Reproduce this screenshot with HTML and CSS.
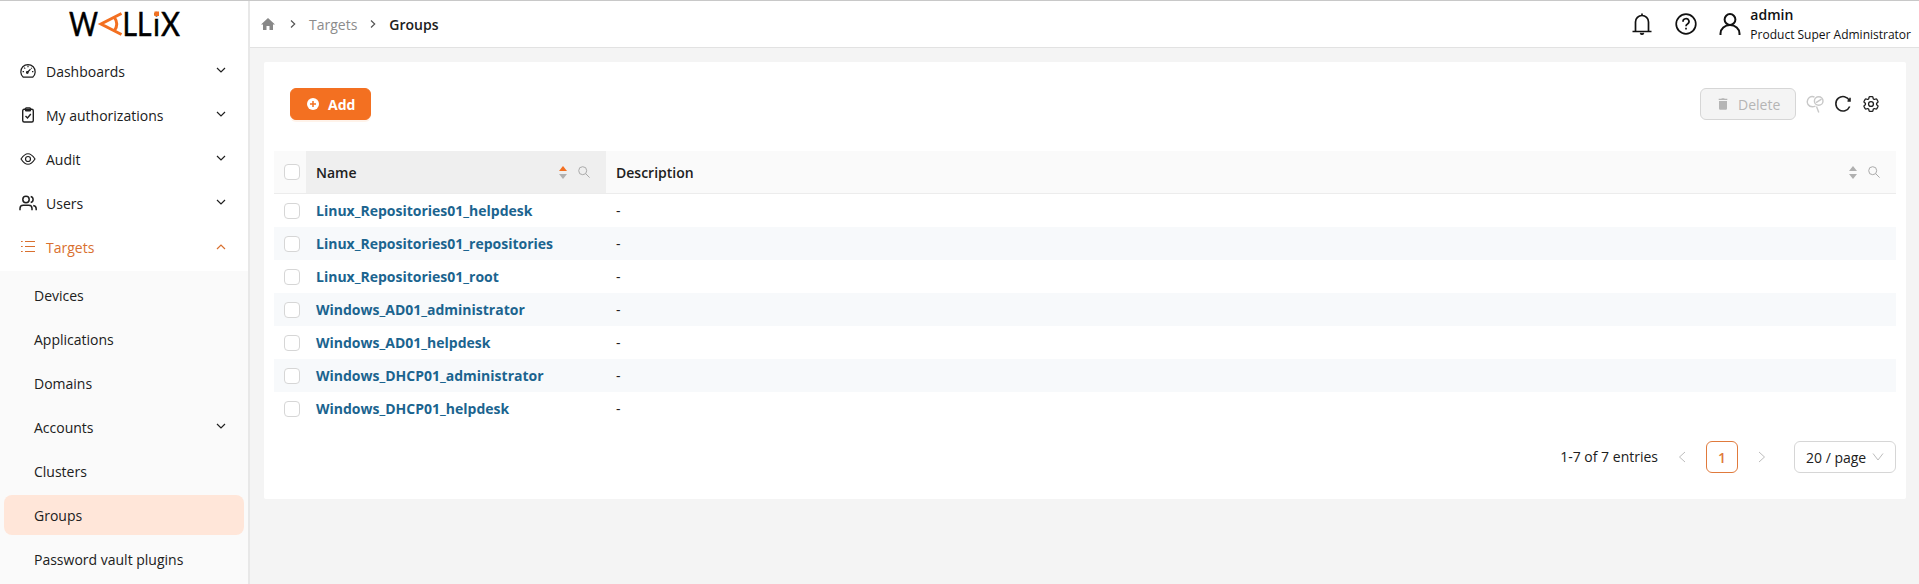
FILE: index.html
```html
<!DOCTYPE html>
<html lang="en">
<head>
<meta charset="utf-8">
<title>Groups</title>
<link rel="stylesheet" href="styles.css">
</head>
<body>
<svg width="0" height="0" class="defs">
  <symbol id="down" viewBox="0 0 10 10"><path d="M1 3l4 4 4-4"/></symbol>
  <symbol id="up" viewBox="0 0 10 10"><path d="M1 7l4-4 4 4"/></symbol>
  <symbol id="right" viewBox="0 0 10 10"><path d="M3 1.500l3.700 3.500L3 8.500"/></symbol>
  <symbol id="search" viewBox="0 0 12 12"><circle cx="4.700" cy="4.700" r="4"/><path d="M7.600 7.600l4 4"/></symbol>
</svg>
<div class="app">
  <aside class="sidebar">
    <div class="brand">
      <svg class="logo" width="112" height="28" viewBox="0 0 112 28">
        <text x="0" y="26" textLength="29" lengthAdjust="spacingAndGlyphs">W</text>
        <path class="mark" d="M52.500 3.500L32 14l20.500 10.500M45.500 7.500q4.500 6.500 0 13"/>
        <text x="53.500" y="26" textLength="29" lengthAdjust="spacingAndGlyphs">LL</text>
        <text x="84" y="26" textLength="7" lengthAdjust="spacingAndGlyphs">i</text>
        <rect class="dot" x="85.500" y="1.500" width="4.500" height="4.500"/>
        <text x="92" y="26" textLength="19" lengthAdjust="spacingAndGlyphs">X</text>
      </svg>
    </div>
    <nav class="menu">
      <a class="item"><svg class="icon" viewBox="0 0 16 16"><path d="M3.300 14.200h9.400A7.200 7.200 0 1 0 3.300 14.200zM7.300 9.500l3.200-3.300M8 2.800v1.400M4.200 4.700l1 1M2.600 8.700H4M12 8.700h1.400M11.200 5.500l.6-.7"/><circle cx="7.300" cy="9.500" r=".8"/></svg><span>Dashboards</span><svg class="chev"><use href="#down"/></svg></a>
      <a class="item"><svg class="icon bold" viewBox="0 0 16 16"><rect x="2.700" y="2.300" width="10.600" height="12.700" rx="1.500"/><rect x="5.500" y=".9" width="5" height="2.800" rx=".8"/><path d="M5.500 9l2 2 3.300-4"/></svg><span>My authorizations</span><svg class="chev"><use href="#down"/></svg></a>
      <a class="item"><svg class="icon" viewBox="0 0 16 16"><path d="M1 8q7-10.500 14 0-7 10.500-14 0z"/><circle cx="8" cy="8" r="2.500"/></svg><span>Audit</span><svg class="chev"><use href="#down"/></svg></a>
      <a class="item"><svg class="icon wide" viewBox="0 0 18 16"><circle cx="7" cy="4.500" r="3.200"/><path d="M1 15.200v-1.700q0-3.200 3.200-3.200h5.600q3.200 0 3.200 3.200v1.700M11.700 1.400a3.200 3.200 0 0 1 0 6.200M14.200 10.500q3 .6 3 3.200v1.500"/></svg><span>Users</span><svg class="chev"><use href="#down"/></svg></a>
      <a class="item open"><svg class="icon" viewBox="0 0 16 16"><path d="M5 2.500h10M5 7.500h10M5 12.500h10M1 2.500h1.700M1 7.500h1.700M1 12.500h1.700"/></svg><span>Targets</span><svg class="chev"><use href="#up"/></svg></a>
      <div class="submenu">
        <a class="item"><span>Devices</span></a>
        <a class="item"><span>Applications</span></a>
        <a class="item"><span>Domains</span></a>
        <a class="item"><span>Accounts</span><svg class="chev"><use href="#down"/></svg></a>
        <a class="item"><span>Clusters</span></a>
        <a class="item selected"><span>Groups</span></a>
        <a class="item"><span>Password vault plugins</span></a>
      </div>
    </nav>
  </aside>
  <div class="content">
    <header class="topbar">
      <div class="crumbs">
        <svg class="home" viewBox="0 0 14 12"><path d="M7 0l7 6.500h-2V12H8.500V8h-3v4H2V6.500H0z"/></svg>
        <svg class="sep first"><use href="#right"/></svg>
        <span class="parent">Targets</span>
        <svg class="sep"><use href="#right"/></svg>
        <span class="current">Groups</span>
      </div>
      <div class="account">
        <svg class="tool" viewBox="0 0 22 22"><path d="M1.500 18.500h19M4.500 18.500V9a6.500 6.500 0 0 1 13 0v9.500M11 2.500V.5M9.300 20.200q1.700 1.800 3.400 0"/></svg>
        <svg class="tool" viewBox="0 0 22 22"><circle cx="11" cy="11" r="9.800"/><path d="M8 8.700a3 2.800 0 1 1 4.500 2.200q-1.500.8-1.500 2.300M11 14.700v1.700"/></svg>
        <svg class="tool person" viewBox="0 0 22 22"><circle cx="11" cy="6.500" r="5.400"/><path d="M1.500 22v-1.500a9.500 8.500 0 0 1 19 0V22"/></svg>
        <div class="who"><div class="login">admin</div><div class="role">Product Super Administrator</div></div>
      </div>
    </header>
    <main class="card">
      <div class="toolbar">
        <button class="btn primary"><svg width="12" height="12" viewBox="0 0 12 12"><circle cx="6" cy="6" r="6"/><path d="M6 3v6M3 6h6"/></svg><span>Add</span></button>
        <div class="actions">
          <button class="btn disabled"><svg width="10" height="12" viewBox="0 0 10 12"><path d="M1 3h8v7.500q0 1.200-1.200 1.200H2.200Q1 11.700 1 10.500zM.7.8h2.500L4 .2h2l.8.6h2.500V2H.7z"/></svg><span>Delete</span></button>
          <svg class="act muted" viewBox="0 0 18 18"><path d="M8.500 2.200Q6 .5 3.300 2.500 0 5.500 2 9.500q2.500 3.500 7.500 1.700M10.500 11.500l2.300 6"/><circle cx="12.700" cy="6" r="4.300"/><path d="M10 7.700l5.500-3.500"/></svg>
          <svg class="act" viewBox="0 0 18 18"><path d="M15.500 5.500A7.200 7.200 0 1 0 15.700 11.500M16 2.700v3.300h-2.500"/></svg>
          <svg class="act" viewBox="1 1 22 22"><path d="M9.594 3.940c.09-.542.56-.94 1.110-.94h2.593c.55 0 1.020.398 1.110.94l.213 1.281c.063.374.313.686.645.87.074.04.147.083.22.127.325.196.72.257 1.075.124l1.217-.456a1.125 1.125 0 0 1 1.370.49l1.296 2.247a1.125 1.125 0 0 1-.26 1.431l-1.003.827c-.293.241-.438.613-.43.992a7.723 7.723 0 0 1 0 .255c-.008.378.137.75.43.991l1.004.827c.424.35.534.955.26 1.430l-1.298 2.247a1.125 1.125 0 0 1-1.369.491l-1.217-.456c-.355-.133-.75-.072-1.076.124a6.470 6.470 0 0 1-.22.128c-.331.183-.581.495-.644.869l-.213 1.281c-.09.543-.56.94-1.110.94h-2.594c-.55 0-1.019-.398-1.110-.94l-.213-1.281c-.062-.374-.312-.686-.644-.87a6.520 6.520 0 0 1-.22-.127c-.325-.196-.72-.257-1.076-.124l-1.217.456a1.125 1.125 0 0 1-1.369-.49l-1.297-2.247a1.125 1.125 0 0 1 .26-1.431l1.004-.827c.292-.24.437-.613.43-.991a6.932 6.932 0 0 1 0-.255c.007-.38-.138-.751-.43-.992l-1.004-.827a1.125 1.125 0 0 1-.26-1.430l1.297-2.247a1.125 1.125 0 0 1 1.370-.491l1.216.456c.356.133.751.072 1.076-.124.072-.044.146-.086.22-.128.332-.183.582-.495.644-.869z"/><circle cx="12" cy="12" r="3"/></svg>
        </div>
      </div>
      <div class="table">
        <div class="row head">
          <div class="cell"><i class="check"></i></div>
          <div class="cell sorted"><span>Name</span><svg class="sort" viewBox="0 0 8 13"><path class="on" d="M0 5l4-5 4 5z"/><path d="M0 8h8l-4 5z"/></svg><svg class="find"><use href="#search"/></svg></div>
          <div class="cell"><span>Description</span><svg class="sort" viewBox="0 0 8 13"><path d="M0 5l4-5 4 5zM0 8h8l-4 5z"/></svg><svg class="find"><use href="#search"/></svg></div>
        </div>
        <div class="row"><div class="cell"><i class="check"></i></div><a class="cell">Linux_Repositories01_helpdesk</a><div class="cell">-</div></div>
        <div class="row"><div class="cell"><i class="check"></i></div><a class="cell">Linux_Repositories01_repositories</a><div class="cell">-</div></div>
        <div class="row"><div class="cell"><i class="check"></i></div><a class="cell">Linux_Repositories01_root</a><div class="cell">-</div></div>
        <div class="row"><div class="cell"><i class="check"></i></div><a class="cell">Windows_AD01_administrator</a><div class="cell">-</div></div>
        <div class="row"><div class="cell"><i class="check"></i></div><a class="cell">Windows_AD01_helpdesk</a><div class="cell">-</div></div>
        <div class="row"><div class="cell"><i class="check"></i></div><a class="cell">Windows_DHCP01_administrator</a><div class="cell">-</div></div>
        <div class="row"><div class="cell"><i class="check"></i></div><a class="cell">Windows_DHCP01_helpdesk</a><div class="cell">-</div></div>
      </div>
      <div class="pager">
        <span class="total">1-7 of 7 entries</span>
        <span class="step"><svg viewBox="0 0 8 12"><path d="M7 1L1.500 6 7 11"/></svg></span>
        <span class="page">1</span>
        <span class="step"><svg viewBox="0 0 8 12"><path d="M1 1l5.500 5L1 11"/></svg></span>
        <div class="size"><span>20 / page</span><svg viewBox="0 0 12 10"><path d="M1 1.500l5 6.500 5-6.500"/></svg></div>
      </div>
    </main>
  </div>
</div>
</body>
</html>
```
FILE: styles.css
```css
* { box-sizing: border-box; }
body {
  margin: 0;
  height: 584px;
  overflow: hidden;
  background: #f4f4f4;
  color: #202020;
  font: 14px/22px "Open Sans", sans-serif;
}
svg { fill: none; stroke: currentColor; flex: none; }
.defs { display: none; }
.app { display: flex; height: 584px; border-top: 1px solid #c8c8c8; }

.sidebar { width: 250px; flex: none; background: #fff; border-right: 2px solid #e8e8e8; }
.brand { height: 46px; padding: 9px 0 0 69px; }
.logo { display: block; overflow: visible; }
.logo text { font: 33px Lato, sans-serif; fill: #000; stroke: #000; stroke-width: .5; }
.logo .mark { stroke: #f37021; stroke-width: 3; }
.logo .dot { fill: #f37021; stroke: none; }
.menu { padding-top: 4px; }
.item {
  display: flex;
  align-items: center;
  height: 40px;
  margin: 0 4px 4px;
  padding: 0 18px 0 16px;
  border-radius: 8px;
}
.item span { padding-top: 2px; }
.icon { width: 16px; height: 16px; margin-right: 10px; stroke-width: 1.200; }
.icon.bold { stroke-width: 1.400; }
.icon.wide { width: 18px; margin: 0 9px 0 -1px; stroke-width: 1.500; }
.chev { width: 10px; height: 10px; margin: -2px 0 0 auto; stroke-width: 1.200; }
.open { color: #d9702f; }
.open .chev { margin-top: 0; }
.submenu { background: #fafafa; padding-top: 4px; height: 320px; }
.submenu .item { padding-left: 30px; }
.submenu .selected { background: #ffe6d9; }

.content { flex: 1; min-width: 0; }
.topbar {
  height: 47px;
  display: flex;
  align-items: center;
  justify-content: space-between;
  background: #fff;
  border-bottom: 1px solid #e2e2e2;
  padding: 0 8px 0 11px;
}
.crumbs { display: flex; align-items: center; }
.crumbs span { padding-top: 2px; }
.home { width: 14px; height: 12px; fill: #888; stroke: none; }
.sep { width: 10px; height: 10px; margin: 0 11px; color: #555; stroke-width: 1.200; }
.sep.first { margin: 0 11px 0 13px; }
.parent { color: #8c8c8c; }
.current { font-weight: 600; }
.account { display: flex; align-items: center; color: #111; }
.tool { width: 22px; height: 22px; margin-right: 22px; stroke-width: 1.700; }
.person { margin-right: 9px; stroke-width: 2; }
.who { padding-top: 3px; }
.login { font-weight: 600; line-height: 18px; }
.role { font-size: 12px; line-height: 21px; }

.card { margin: 14px 13px 0 14px; height: 437px; background: #fff; border-radius: 2px; padding: 26px 10px 0; }
.toolbar { display: flex; justify-content: space-between; height: 63px; padding: 0 16px; align-items: flex-start; }
.btn {
  display: flex;
  align-items: center;
  height: 32px;
  border-radius: 6px;
  font: 14px/22px "Open Sans", sans-serif;
  padding: 0 16px;
  border: 1px solid #d6d6d6;
}
.btn span { padding-top: 1px; }
.primary { width: 81px; background: #f37021; border-color: #f37021; color: #fff; font-weight: 700; box-shadow: 0 2px 0 #fff3ea; }
.primary svg { fill: #fff; stroke: none; margin-right: 9px; }
.primary path { stroke: #f37021; stroke-width: 1.500; }
.disabled { width: 96px; background: #f4f4f4; color: #b5b5b5; }
.disabled svg { fill: #b5b5b5; stroke: none; margin: 0 10px 0 1px; }
.actions { display: flex; align-items: center; gap: 10px; }
.act { width: 18px; height: 18px; stroke-width: 1.600; }
.muted { color: #c8c8c8; stroke-width: 1.400; }

.row { display: grid; grid-template-columns: 32px 300px 1fr; height: 33px; }
.row:nth-child(odd):not(.head) { background: #f7f9fb; }
.cell { display: flex; align-items: center; padding: 0 10px; }
a.cell { color: #1b648f; font-weight: 700; }
.head { height: 43px; background: #fafafa; border-bottom: 1px solid #ececec; font-weight: 600; }
.head span { padding-top: 2px; }
.sorted { background: #efefef; }
.check { flex: none; width: 16px; height: 16px; border: 1px solid #d6d6d6; border-radius: 4px; background: #fff; }
.sort { width: 8px; height: 13px; margin: 0 11px 0 auto; fill: #b0b0b0; stroke: none; }
.sort .on { fill: #f37021; }
.find { width: 12px; height: 12px; margin-right: 6px; color: #aaa; }

.pager { display: flex; align-items: center; justify-content: flex-end; height: 32px; margin-top: 16px; }
.total { margin-right: 8px; }
.step { width: 32px; display: flex; justify-content: center; color: #bdbdbd; }
.step svg { width: 8px; height: 12px; }
.page { width: 32px; height: 32px; margin: 0 8px; border: 1px solid #e07a3c; border-radius: 6px; color: #e07a3c; font-weight: 600; line-height: 31px; text-align: center; }
.size { width: 102px; height: 32px; margin-left: 16px; padding: 0 11px; display: flex; align-items: center; justify-content: space-between; border: 1px solid #d6d6d6; border-radius: 6px; }
.size span { padding-top: 1px; }
.size svg { width: 12px; height: 10px; color: #bdbdbd; }
```
